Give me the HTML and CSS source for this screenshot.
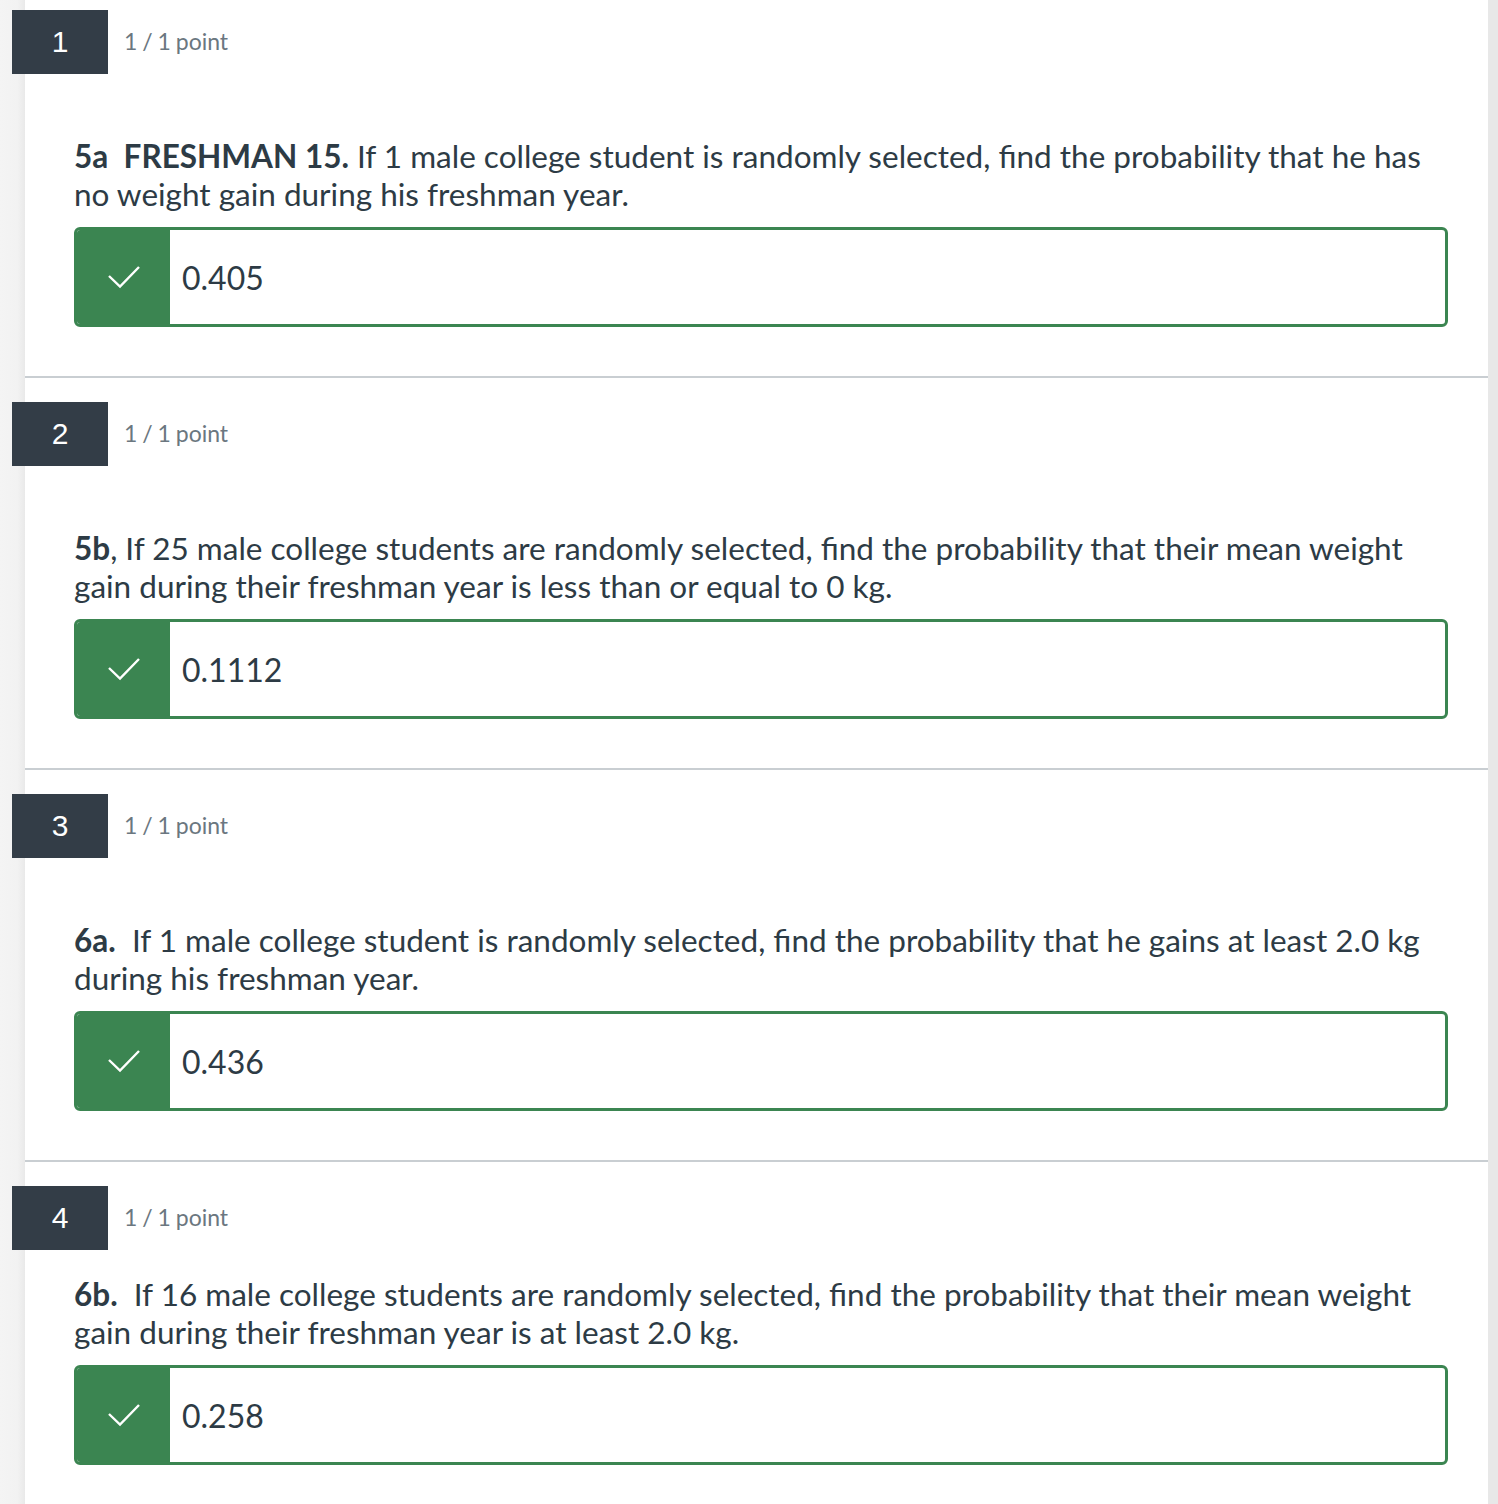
FILE: index.html
```html
<!DOCTYPE html>
<html>
<head>
<meta charset="utf-8">
<link rel="stylesheet" href="styles.css">
</head>
<body>
<div class="page">
  <div class="gutter-left"></div>
  <main class="main">
    <section class="question first">
      <div class="q-header">
        <div class="badge">1</div>
        <div class="points">1 / 1 point</div>
      </div>
      <div class="q-body">
        <p class="spacer"></p>
        <p class="q-text"><b>5a&nbsp; FRESHMAN 15.</b> If 1 male college student is randomly selected, find the probability that he has no weight gain during his freshman year.</p>
        <div class="answer">
          <div class="answer-icon"><svg width="34" height="24" viewBox="0 0 34 24"><path d="M2 11 L13 21.5 L32 2" fill="none" stroke="#fff" stroke-width="2.4"/></svg></div>
          <div class="answer-value">0.405</div>
        </div>
      </div>
    </section>
    <section class="question">
      <div class="q-header">
        <div class="badge">2</div>
        <div class="points">1 / 1 point</div>
      </div>
      <div class="q-body">
        <p class="spacer"></p>
        <p class="q-text"><b>5b</b>, If 25 male college students are randomly selected, find the probability that their mean weight gain during their freshman year is less than or equal to 0 kg.</p>
        <div class="answer">
          <div class="answer-icon"><svg width="34" height="24" viewBox="0 0 34 24"><path d="M2 11 L13 21.5 L32 2" fill="none" stroke="#fff" stroke-width="2.4"/></svg></div>
          <div class="answer-value">0.1112</div>
        </div>
      </div>
    </section>
    <section class="question">
      <div class="q-header">
        <div class="badge">3</div>
        <div class="points">1 / 1 point</div>
      </div>
      <div class="q-body">
        <p class="spacer"></p>
        <p class="q-text"><b>6a.</b>&nbsp; If 1 male college student is randomly selected, find the probability that he gains at least 2.0 kg during his freshman year.</p>
        <div class="answer">
          <div class="answer-icon"><svg width="34" height="24" viewBox="0 0 34 24"><path d="M2 11 L13 21.5 L32 2" fill="none" stroke="#fff" stroke-width="2.4"/></svg></div>
          <div class="answer-value">0.436</div>
        </div>
      </div>
    </section>
    <section class="question last">
      <div class="q-header">
        <div class="badge">4</div>
        <div class="points">1 / 1 point</div>
      </div>
      <div class="q-body">
        <p class="q-text"><b>6b.</b>&nbsp; If 16 male college students are randomly selected, find the probability that their mean weight gain during their freshman year is at least 2.0 kg.</p>
        <div class="answer">
          <div class="answer-icon"><svg width="34" height="24" viewBox="0 0 34 24"><path d="M2 11 L13 21.5 L32 2" fill="none" stroke="#fff" stroke-width="2.4"/></svg></div>
          <div class="answer-value">0.258</div>
        </div>
      </div>
    </section>
  </main>
  <div class="gutter-right"></div>
</div>
</body>
</html>
```
FILE: styles.css
```css
html, body {
  margin: 0;
  padding: 0;
  background: #ffffff;
}
body {
  font-family: Lato, "Noto Sans", sans-serif;
  color: #2d3b45;
}
.page {
  display: flex;
  width: 1498px;
  min-height: 1504px;
}
.gutter-left {
  width: 25px;
  flex: none;
  background: linear-gradient(to right, #f4f4f4 0%, #f2f2f2 70%, #e9e9e9 100%);
}
.gutter-right {
  width: 10px;
  flex: none;
  background: #e8e8e8;
}
.main {
  width: 1463px;
  flex: none;
  background: #fff;
}
.question {
  padding-top: 24px;
  padding-bottom: 49px;
  border-bottom: 2px solid #c9ced2;
}
.question.first {
  padding-top: 10px;
}
.question.last {
  border-bottom: none;
}
.q-header {
  display: flex;
  align-items: center;
  margin-left: -13px;
}
.badge {
  width: 96px;
  height: 64px;
  background: #333d47;
  color: #fff;
  font-family: "Liberation Sans", Arial, sans-serif;
  font-size: 30px;
  display: flex;
  align-items: center;
  justify-content: center;
}
.points {
  margin-left: 16px;
  font-size: 23px;
  color: #6b7780;
  word-spacing: -1px;
  margin-top: -2px;
}
.q-body {
  padding: 25px 40px 0 49px;
}
.spacer {
  margin: 0;
  height: 38px;
}
.q-text {
  margin: 0;
  font-size: 31.5px;
  line-height: 38px;
  letter-spacing: 0;
}
.q-text b {
  font-weight: 700;
}
.answer {
  margin-top: 14px;
  width: 1374px;
  height: 100px;
  box-sizing: border-box;
  border: 3px solid #3b8551;
  border-radius: 6px;
  display: flex;
  overflow: hidden;
}
.answer-icon {
  width: 93px;
  flex: none;
  background: #3b8551;
  display: flex;
  align-items: center;
  justify-content: center;
}
.answer-icon svg {
  display: block;
  margin-left: 0;
}
.answer-value {
  display: flex;
  align-items: center;
  padding-left: 12px;
  font-size: 32px;
  color: #2d3b45;
}
```
